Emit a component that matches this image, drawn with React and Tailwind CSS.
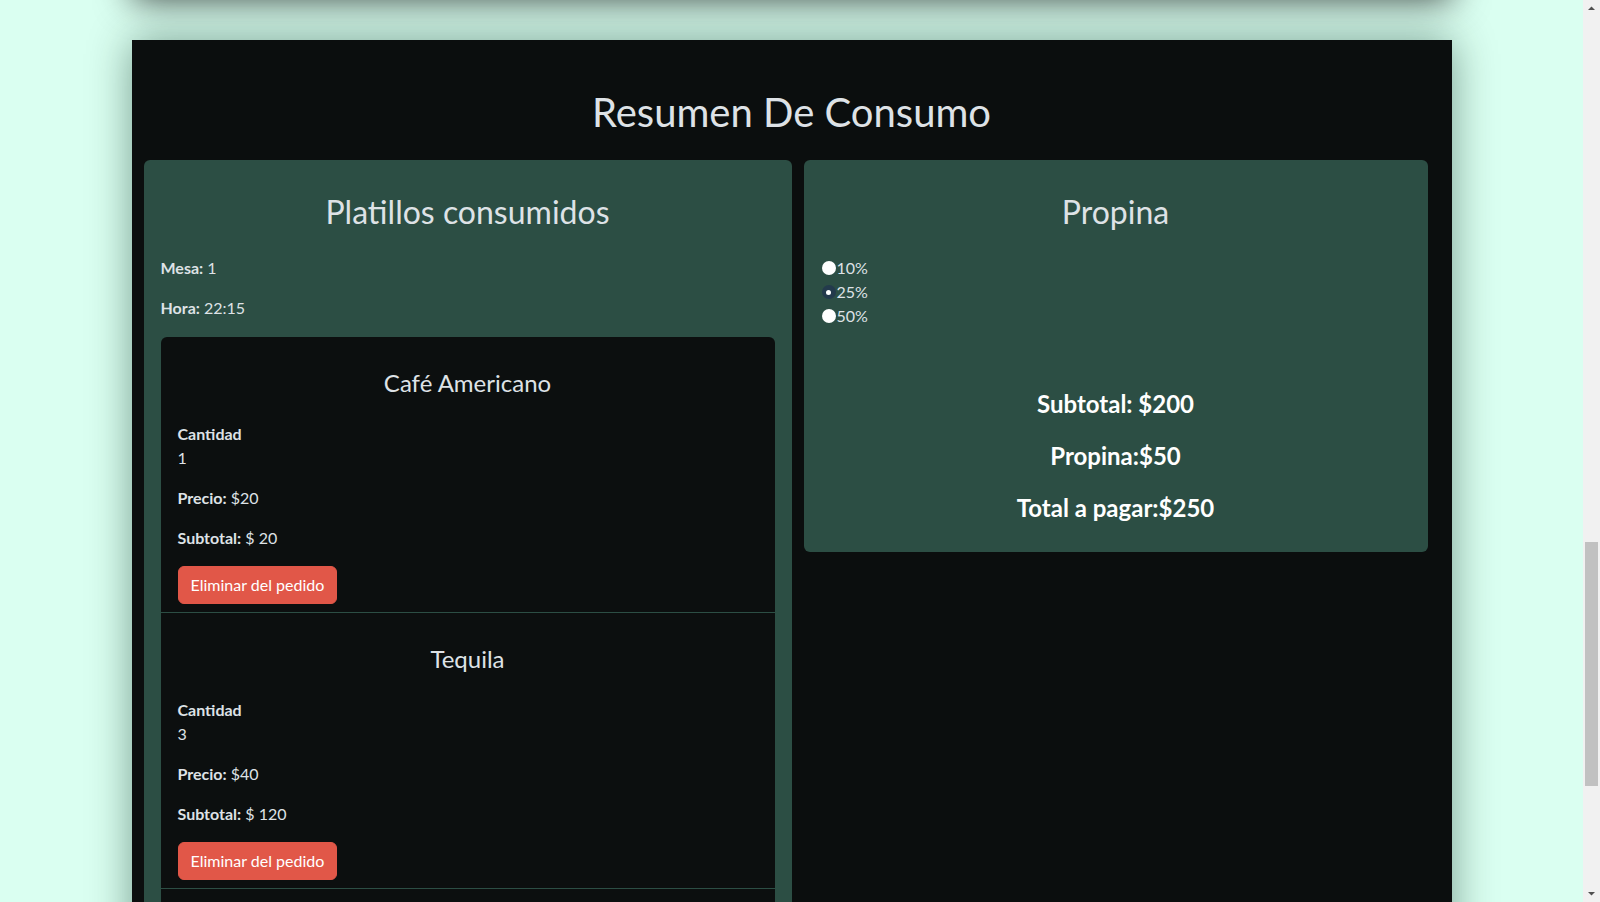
import React, { useState } from 'react';

const pedidos = [
	{ id: 1, nombre: "Café Americano", cantidad: 1, precio: 20 },
	{ id: 2, nombre: "Tequila", cantidad: 3, precio: 40 },
	{ id: 3, nombre: "Cerveza", cantidad: 2, precio: 30 },
];

const propinas = [10, 25, 50];

const Radio = ({ checked }) =>
	checked ? (
		<span className="ml-px mr-px w-[14px] h-[14px] rounded-full bg-[#233a4c] flex items-center justify-center">
			<span className="w-[5px] h-[5px] rounded-full bg-white"></span>
		</span>
	) : (
		<span className="ml-px mr-px w-[14px] h-[14px] rounded-full bg-white"></span>
	);

// barra de desplazamiento de la ventana
const Scrollbar = () => (
	<div className="w-[17px] shrink-0 bg-[#f1f1f1] flex flex-col items-center">
		<svg width="17" height="17" viewBox="0 0 17 17"><path d="M5 10h7L8.5 6.5z" fill="#505050" /></svg>
		<div className="h-[525px]"></div>
		<div className="w-[13px] h-[244px] bg-[#c1c1c1]"></div>
		<div className="flex-1"></div>
		<svg width="17" height="17" viewBox="0 0 17 17"><path d="M5 7h7l-3.5 3.5z" fill="#505050" /></svg>
	</div>
);

const App = () => {
	const [propina, setPropina] = useState(25);
	const subtotal = pedidos.reduce((t, p) => t + p.cantidad * p.precio, 0);
	const monto = (subtotal * propina) / 100;

	return (
		<div className="h-screen flex overflow-clip bg-[#dafff1] font-['Lato',sans-serif] text-[#dee2e6] text-base leading-6">
			<div className="flex-1 flex flex-col overflow-clip">
				<div className="w-[1320px] mx-auto h-[300px] -mt-[301px] shrink-0 bg-[#0b0e0e] rounded-md shadow-[0_0_36px_rgba(0,0,0,0.75)]"></div>

				<main className="w-[1320px] mx-auto mt-[41px] shrink-0 bg-[#0b0e0e] px-3 pt-12 pb-12 shadow-[0_0_40px_rgba(0,40,25,0.45)]">
					<h1 className="text-[40px] leading-[48px] text-center font-normal mb-6">Resumen De Consumo</h1>

					<div className="flex items-start gap-3">
						<section className="w-[648px] bg-[#2c4e44] rounded-md p-[17px]">
							<h2 className="text-[32px] leading-[38.4px] text-center mt-4 mb-[25px]">Platillos consumidos</h2>
							<p className="mb-4"><span className="font-bold">Mesa:</span> 1</p>
							<p className="mb-[17px]"><span className="font-bold">Hora:</span> 22:15</p>

							<ul className="bg-[#0c0f0f] rounded-md">
								{pedidos.map((p) => (
									<li key={p.id} className="px-[17px] pt-[32px] pb-[8px] border-b border-[#2c4e44]">
										<h4 className="text-2xl leading-[28.8px] text-center mb-6">{p.nombre}</h4>
										<p className="font-bold">Cantidad</p>
										<p className="mb-4">{p.cantidad}</p>
										<p className="mb-4"><span className="font-bold">Precio:</span> ${p.precio}</p>
										<p className="mb-4"><span className="font-bold">Subtotal:</span> $ {p.cantidad * p.precio}</p>
										<button className="bg-[#e15748] border border-[#e15748] text-white rounded-md px-3 py-1.5 leading-6">
											Eliminar del pedido
										</button>
									</li>
								))}
							</ul>
						</section>

						<section className="w-[624px] bg-[#2c4e44] rounded-md p-[17px] pb-[18px]">
							<h2 className="text-[32px] leading-[38.4px] text-center mt-4 mb-[25px]">Propina</h2>
							<div className="flex flex-col">
								{propinas.map((v) => (
									<label key={v} className="flex items-center h-6 cursor-pointer" onClick={() => setPropina(v)}>
										<Radio checked={propina === v} />
										<span>{v}%</span>
									</label>
								))}
							</div>
							<div className="mt-[50px] text-center text-white font-bold text-2xl leading-[52px]">
								<p>Subtotal: ${subtotal}</p>
								<p>Propina:${monto}</p>
								<p>Total a pagar:${subtotal + monto}</p>
							</div>
						</section>
					</div>
				</main>
			</div>
			<Scrollbar />
		</div>
	);
};

export default App;
